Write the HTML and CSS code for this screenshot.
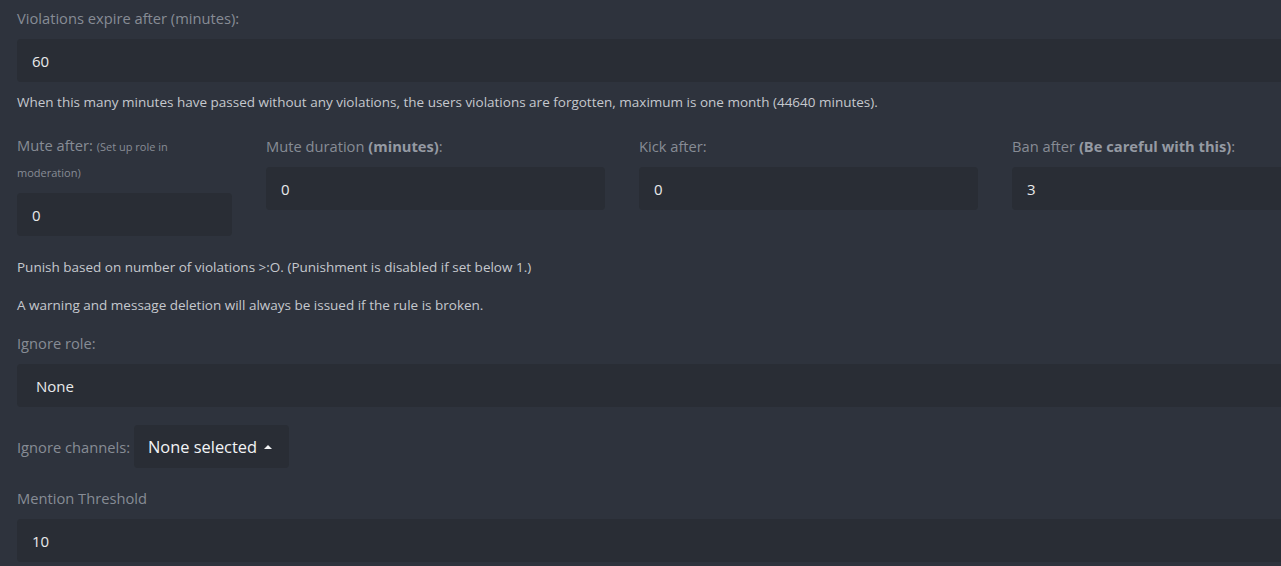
FILE: index.html
```html
<!DOCTYPE html>
<html>
<head>
<meta charset="utf-8">
<link rel="stylesheet" href="styles.css">
</head>
<body>
<div class="page">
  <div class="group">
    <label class="label">Violations expire after (minutes):</label>
    <div class="input wide">60</div>
    <p class="help first">When this many minutes have passed without any violations, the users violations are forgotten, maximum is one month (44640 minutes).</p>
  </div>

  <div class="row">
    <div class="col c1">
      <label class="label">Mute after: <small>(Set up role in moderation)</small></label>
      <div class="input">0</div>
    </div>
    <div class="col c2">
      <label class="label">Mute duration <b>(minutes)</b>:</label>
      <div class="input">0</div>
    </div>
    <div class="col c3">
      <label class="label">Kick after:</label>
      <div class="input">0</div>
    </div>
    <div class="col c4">
      <label class="label">Ban after <b>(Be careful with this)</b>:</label>
      <div class="input">3</div>
    </div>
  </div>

  <p class="help punish">Punish based on number of violations &gt;:O. (Punishment is disabled if set below 1.)</p>
  <p class="help warn">A warning and message deletion will always be issued if the rule is broken.</p>

  <div class="group role">
    <label class="label">Ignore role:</label>
    <div class="input wide select">None</div>
  </div>

  <div class="channels">
    <label class="label inline">Ignore channels:</label>
    <button class="dropdown">None selected <span class="caret"></span></button>
  </div>

  <div class="group mention">
    <label class="label">Mention Threshold</label>
    <div class="input wide">10</div>
  </div>
</div>
</body>
</html>
```

FILE: styles.css
```css
html, body {
  margin: 0;
  padding: 0;
  background: #2e333d;
  overflow: hidden;
}
body {
  font-family: "Open Sans", "Liberation Sans", sans-serif;
  color: #c9ccd1;
}
.page {
  padding: 5px 0 0 17px;
  width: 1400px;
}
.label {
  display: block;
  font-size: 14.7px;
  line-height: 26px;
  color: #878c95;
  margin-bottom: 8px;
}
.label b {
  font-weight: 700;
  color: #959aa3;
}
.label small {
  font-size: 11px;
}
.input {
  box-sizing: border-box;
  height: 43px;
  background: #292d35;
  border-radius: 4px;
  padding: 0 15px;
  display: flex;
  align-items: center;
  font-size: 15px;
  color: #e8e9eb;
}
.input.wide {
  width: 1400px;
}
.input.select {
  padding-left: 19px;
  font-size: 15px;
}
.help {
  margin: 0;
  font-size: 13.5px;
  line-height: 20px;
  color: #c5c8ce;
}
.help.first {
  margin-top: 10px;
}
.row {
  display: flex;
  gap: 34px;
  margin-top: 21px;
  align-items: flex-start;
}
.c1 { width: 215px; }
.c1 .label { line-height: 25px; margin-bottom: 8px; }
.c2, .c3 { width: 339px; }
.c4 { width: 339px; }
.help.punish { margin-top: 21px; }
.help.warn { margin-top: 18px; }
.role { margin-top: 15px; }
.channels {
  margin-top: 18px;
  display: flex;
  align-items: center;
  gap: 4px;
}
.label.inline {
  display: inline-block;
  margin: 0;
}
.dropdown {
  box-sizing: border-box;
  height: 43px;
  width: 155px;
  white-space: nowrap;
  background: #292d35;
  border: none;
  border-radius: 4px;
  padding: 0 14px;
  font-family: "Open Sans", "Liberation Sans", sans-serif;
  font-size: 16.4px;
  color: #f2f3f5;
  display: flex;
  align-items: center;
  gap: 7px;
}
.caret {
  width: 0;
  height: 0;
  border-left: 4px solid transparent;
  border-right: 4px solid transparent;
  border-bottom: 4px solid #f2f3f5;
}
.mention { margin-top: 17px; }
```
